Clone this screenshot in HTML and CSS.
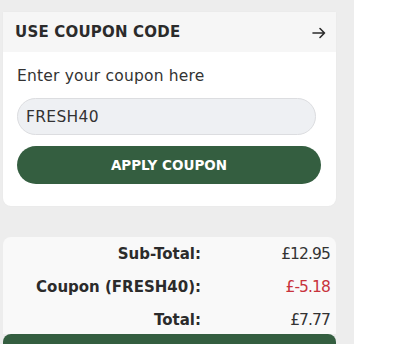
FILE: index.html
```html
<!DOCTYPE html>
<html>
<head>
<meta charset="utf-8">
<link rel="stylesheet" href="styles.css">
</head>
<body>
<div class="panel">
  <div class="card">
    <div class="card-head">
      <span class="title">USE COUPON CODE</span>
      <svg class="arrow" width="14" height="12" viewBox="0 0 14 12"><path d="M1 6H12.5M8 1.5L12.5 6L8 10.5" fill="none" stroke="#2b2b2b" stroke-width="1.6" stroke-linecap="round" stroke-linejoin="round"/></svg>
    </div>
    <div class="card-body">
      <div class="hint">Enter your coupon here</div>
      <div class="input">FRESH40</div>
      <button class="apply">APPLY COUPON</button>
    </div>
  </div>
  <div class="summary">
    <div class="row"><span class="label">Sub-Total:</span><span class="val">£12.95</span></div>
    <div class="row"><span class="label">Coupon (FRESH40):</span><span class="val red">£-5.18</span></div>
    <div class="row"><span class="label">Total:</span><span class="val">£7.77</span></div>
  </div>
  <div class="checkout"></div>
</div>
</body>
</html>
```
FILE: styles.css
```css
html, body { margin: 0; padding: 0; background: #fff; }
body { font-family: "DejaVu Sans", "Open Sans", sans-serif; color: #2b2b2b; }
.panel {
  width: 354px; height: 344px; box-sizing: border-box;
  background: #ededed; padding: 12px 18px 0 3px; overflow: hidden;
}
.card { background: #fff; border-radius: 0 0 8px 8px; box-shadow: 0 0 2px rgba(0,0,0,0.04); }
.card-head {
  height: 40px; background: #f6f6f6; display: flex; align-items: center;
  justify-content: space-between; padding: 0 10px 0 12px;
}
.title { font-weight: bold; font-size: 15px; letter-spacing: 0.2px; }
.arrow { display: block; margin-top: 1px; }
.card-body { padding: 14px 12px 22px 14px; }
.hint { font-size: 15.5px; line-height: 20px; height: 20px; margin-bottom: 12px; color: #333; letter-spacing: 0.2px; }
.input {
  width: 299px; height: 37px; box-sizing: border-box; border: 1px solid #dcdde0;
  border-radius: 19px; background: #eef0f3; font-size: 15.5px; color: #333;
  padding-left: 8px; display: flex; align-items: center; letter-spacing: 0.3px;
}
.apply {
  display: block; margin-top: 11px; width: 304px; height: 38px; border: 0; border-radius: 19px;
  background: #345e40; color: #fff; font-family: inherit; font-weight: bold; font-size: 13.5px;
  padding: 0;
}
.summary {
  margin-top: 31px; background: #f9f9f9; border-radius: 8px 8px 0 0;
  padding: 1px 6px 0 0; height: 97px; box-sizing: border-box;
  display: grid; grid-template-columns: 198px 1fr; grid-auto-rows: 33px;
}
.row { display: contents; }
.label { font-weight: bold; font-size: 15px; text-align: right; line-height: 33px; }
.val { font-size: 15.5px; text-align: right; line-height: 33px; color: #333; letter-spacing: -0.9px; }
.red { color: #c8333c; }
.checkout { height: 20px; background: #345e40; border-radius: 8px 8px 0 0; }
```
